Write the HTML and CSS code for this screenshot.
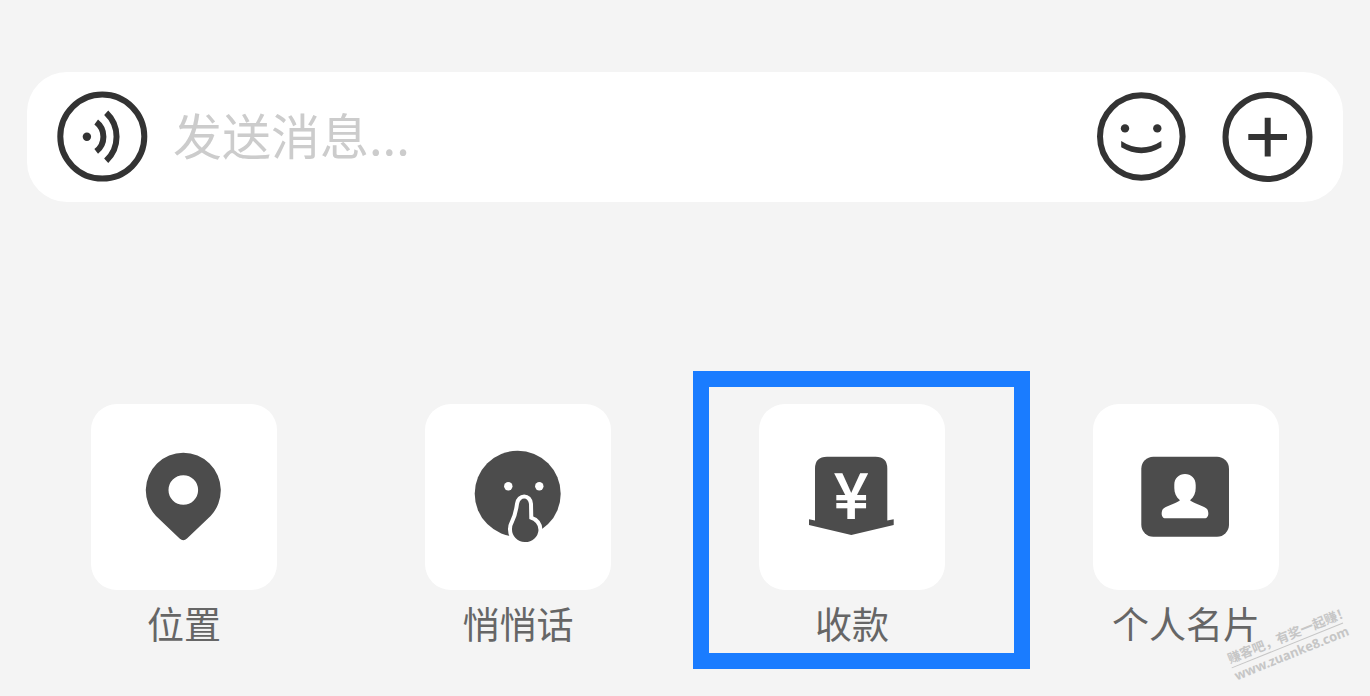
FILE: index.html
```
<!DOCTYPE html>
<html lang="zh-CN">
<head>
    <meta charset="UTF-8">
    <meta name="viewport" content="width=device-width, initial-scale=1.0">
    <title>发送消息</title>
    <link rel="stylesheet" href="styles.css">
</head>
<body>
    <form class="message-bar">
        <button type="button" class="icon-button" aria-label="语音">
            <svg viewBox="0 0 92 92">
                <circle class="line" cx="45.3" cy="45.6" r="42"/>
                <circle class="dot" cx="29.9" cy="45.8" r="4.2"/>
                <path class="line" d="M39.2 31A18.5 18.5 0 0 1 39.2 60.3M49.2 21.7A33 33 0 0 1 49.2 69.7"/>
            </svg>
        </button>
        <input type="text" class="message-input" placeholder="发送消息..." aria-label="发送消息">
        <div class="message-actions">
            <button type="button" class="icon-button" aria-label="表情">
                <svg viewBox="0 0 92 92">
                    <circle class="line" cx="46.3" cy="45.5" r="41.3"/>
                    <circle class="dot" cx="30" cy="37.4" r="4.2"/>
                    <circle class="dot" cx="62.3" cy="37.4" r="4.2"/>
                    <path class="dot" d="M26.2 50Q46.3 63 66.4 50V56.3Q46.3 68 26.2 56.3Z"/>
                </svg>
            </button>
            <button type="button" class="icon-button" aria-label="更多">
                <svg viewBox="0 0 92 92">
                    <circle class="line" cx="46.5" cy="46" r="42"/>
                    <path class="line" d="M27.3 46H66M46.7 26.7V65.5"/>
                </svg>
            </button>
        </div>
    </form>

    <main class="tools">
        <button type="button" class="tool">
            <span class="tile">
                <svg viewBox="0 0 100 100">
                    <path fill-rule="evenodd" d="M22 69A37.5 37.5 0 1 1 76.6 69L53 91.6Q49.3 95 45.6 91.6ZM49.3 28.2A14.8 14.8 0 1 0 49.3 57.8A14.8 14.8 0 1 0 49.3 28.2Z"/>
                </svg>
            </span>
            <span class="tool-label">位置</span>
        </button>

        <button type="button" class="tool">
            <span class="tile">
                <svg viewBox="0 0 100 100">
                    <circle cx="49.7" cy="46.7" r="43"/>
                    <circle class="cut" cx="40.3" cy="39.3" r="4.2"/>
                    <circle class="cut" cx="71.3" cy="39.3" r="4.2"/>
                    <path class="finger" d="M51 57C52 49.5 60.5 49.5 61 57L61.3 72Q70.5 75 70.5 83A13.2 12.5 0 0 1 44 82Q44 78.5 46 75Q49.5 68 51 57Z"/>
                </svg>
            </span>
            <span class="tool-label">悄悄话</span>
        </button>

        <button type="button" class="tool selected">
            <span class="tile">
                <svg viewBox="0 0 100 100">
                    <path d="M13 73.5V21.5Q13 9.7 25 9.7H73.5Q85.3 9.7 85.3 21.5V73.5L91.7 72.3V78L49.3 88L7 78V72.3Z"/>
                    <text class="yuan" x="49.3" y="71">¥</text>
                </svg>
            </span>
            <span class="tool-label">收款</span>
        </button>

        <button type="button" class="tool">
            <span class="tile">
                <svg viewBox="0 0 100 100">
                    <rect x="5.3" y="9.7" width="87.7" height="80" rx="12"/>
                    <path class="cut" d="M44 53.3C40 50 38.3 46 38.3 41V38C38.3 31 43 27 49 27S59.7 31 59.7 38V41C59.7 46 58 50 54 53.3C57 56 66 58.5 70.5 61.5C73 63.5 73.5 71.3 68.5 71.3H29.5C24.5 71.3 25 63.5 27.5 61.5C32 58.5 41 56 44 53.3Z"/>
                </svg>
            </span>
            <span class="tool-label">个人名片</span>
        </button>
    </main>

    <div class="watermark">
        <p class="watermark-slogan">赚客吧，有奖一起赚！</p>
        <p class="watermark-site">www.zuanke8.com</p>
    </div>
</body>
</html>
```
FILE: styles.css
```
:root {
    --background-color: #f4f4f4;
    --card-background: #ffffff;
    --line-color: #333333;
    --icon-color: #4c4c4c;
    --label-color: #666666;
    --placeholder-color: #cccccc;
    --highlight-color: #1a7cff;
    --watermark-color: #c6c6c6;
}

* {
    box-sizing: border-box;
}

body {
    position: relative;
    margin: 0;
    min-height: 100vh;
    padding-top: 72px;
    overflow-x: hidden;
    background-color: var(--background-color);
    font-family: "Noto Sans CJK SC", "Noto Sans", sans-serif;
}

button {
    padding: 0;
    border: none;
    background: none;
    font-family: inherit;
    cursor: pointer;
}

svg {
    display: block;
}

/* Message bar */
.message-bar {
    display: flex;
    align-items: center;
    margin: 0 27px;
    padding: 19px 30px;
    border-radius: 40px;
    background: var(--card-background);
}

.icon-button {
    flex: none;
    width: 92px;
    height: 92px;
}

.line {
    fill: none;
    stroke: var(--line-color);
    stroke-width: 6;
}

.dot {
    fill: var(--line-color);
}

.message-input {
    flex: 1;
    min-width: 0;
    height: 84px;
    margin: 0 24px;
    padding: 0 0 8px;
    border: none;
    outline: none;
    background: none;
    color: var(--line-color);
    font-family: inherit;
    font-size: 49px;
}

.message-input::placeholder {
    color: var(--placeholder-color);
    opacity: 1;
}

.message-actions {
    display: flex;
    gap: 34px;
}

/* Tools */
.tools {
    display: grid;
    grid-template-columns: repeat(4, 1fr);
    margin-top: 202px;
    padding: 0 17px;
}

.tool {
    position: relative;
    display: flex;
    flex-direction: column;
    align-items: center;
    gap: 8px;
}

.tile {
    display: flex;
    align-items: center;
    justify-content: center;
    width: 186px;
    height: 186px;
    border-radius: 26px;
    background: var(--card-background);
}

.tile svg {
    width: 100px;
    height: 100px;
    fill: var(--icon-color);
}

.tile .cut {
    fill: var(--card-background);
}

.finger {
    stroke: var(--card-background);
    stroke-width: 8;
    stroke-linejoin: round;
    paint-order: stroke;
}

.yuan {
    fill: var(--card-background);
    stroke: var(--card-background);
    stroke-width: 2;
    font-size: 61px;
    font-weight: 400;
    text-anchor: middle;
}

.tool-label {
    color: var(--label-color);
    font-size: 37px;
    line-height: 50px;
}

/* Frame over the selected tool */
.selected::after {
    content: "";
    position: absolute;
    top: -33px;
    right: -11px;
    bottom: -21px;
    left: 8px;
    border: 16px solid var(--highlight-color);
}

/* Watermark */
.watermark {
    position: absolute;
    right: 23px;
    bottom: 34px;
    width: 120px;
    color: var(--watermark-color);
    font-weight: 700;
    white-space: nowrap;
    transform: rotate(-22deg);
}

.watermark p {
    margin: 0;
}

.watermark-slogan {
    border-bottom: 1px solid var(--watermark-color);
    font-size: 13px;
    line-height: 18px;
}

.watermark-site {
    font-family: "Noto Sans", sans-serif;
    font-size: 13px;
    line-height: 16px;
}
```
